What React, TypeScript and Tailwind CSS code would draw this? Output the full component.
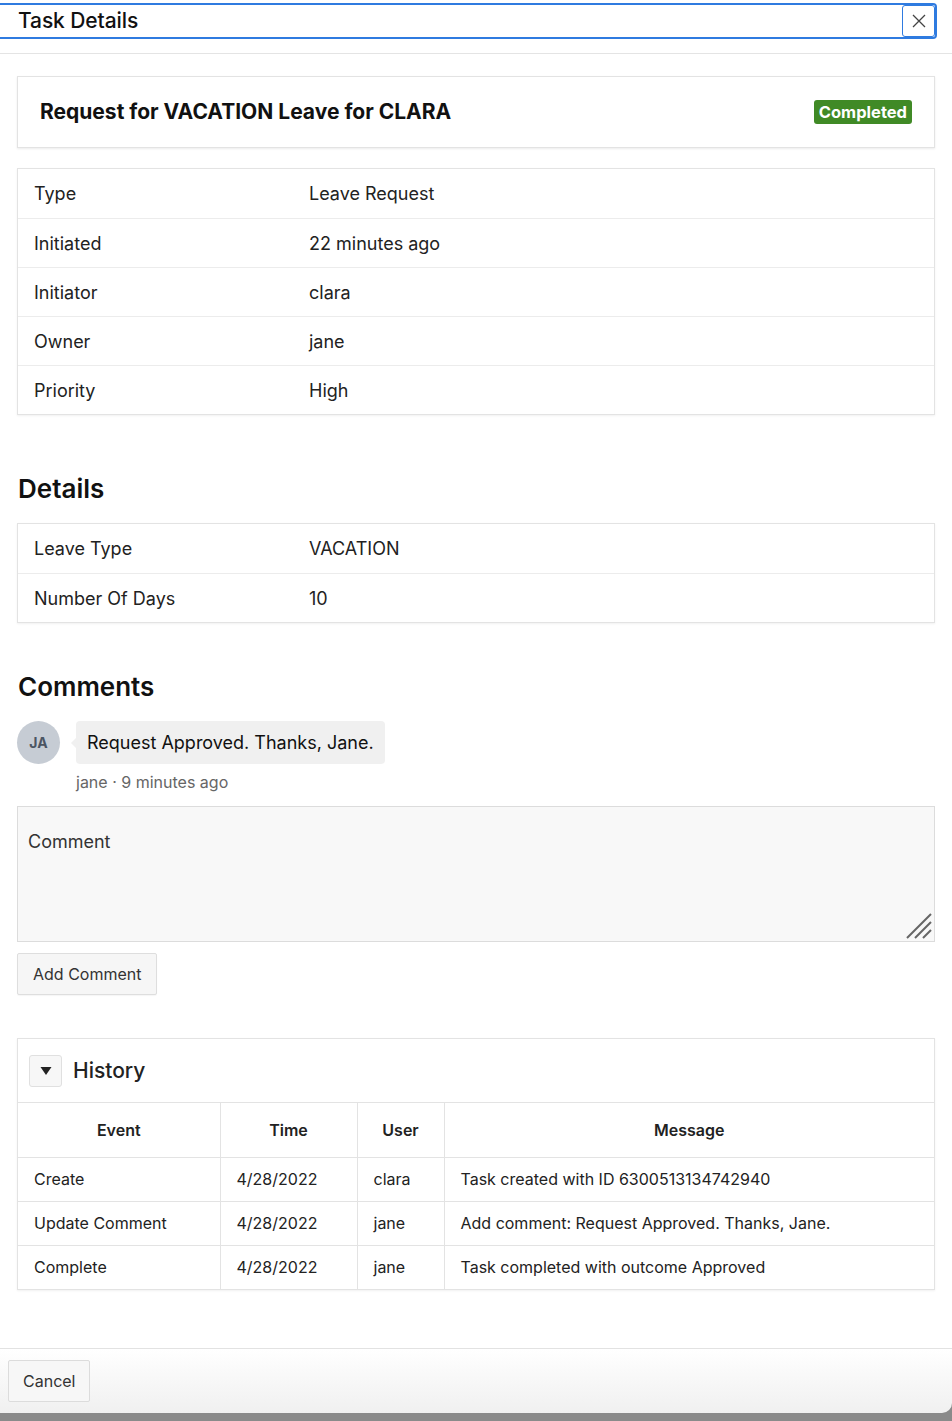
import React from "react";

const font = { fontFamily: "Inter, 'Noto Sans', sans-serif" };

function KV({ rows }: { rows: [string, string][] }) {
  return (
    <div className="mx-[17px] border border-[#e3e3e3] shadow-[0_1px_2px_rgba(0,0,0,0.06)] bg-white">
      {rows.map(([k, v], i) => (
        <div
          key={k}
          className={`flex h-[49px] items-center text-[18px] text-[#222] ${i > 0 ? "border-t border-[#ececec]" : ""}`}
        >
          <div className="w-[291px] pl-[16px]">{k}</div>
          <div>{v}</div>
        </div>
      ))}
    </div>
  );
}

export default function App() {
  const history = [
    ["Create", "4/28/2022", "clara", "Task created with ID 6300513134742940"],
    ["Update Comment", "4/28/2022", "jane", "Add comment: Request Approved. Thanks, Jane."],
    ["Complete", "4/28/2022", "jane", "Task completed with outcome Approved"],
  ];
  return (
    <div style={font} className="w-[952px] h-[1421px] bg-[#8a8a8a] flex flex-col overflow-hidden">
      <div className="bg-white flex-1 flex flex-col">
        {/* Header */}
        <div className="pt-[3px] h-[54px] border-b border-[#e4e4e4]">
          <div className="flex items-center h-[36px] w-[937px] border-2 border-[#2f7be0] rounded-r-[4px] border-l-0 bg-white">
            <div className="pl-[18px] text-[21px] font-medium text-[#111] flex-1 tracking-[-0.1px]">Task Details</div>
            <button className="mr-[0px] h-[32px] w-[33px] border border-[#2f7be0] rounded-[3px] flex items-center justify-center bg-white">
              <svg width="16" height="16" viewBox="0 0 16 16">
                <path d="M2 2 L14 14 M14 2 L2 14" stroke="#444" strokeWidth="1.3" />
              </svg>
            </button>
          </div>
        </div>

        {/* Title card */}
        <div className="mt-[22px] mx-[17px] h-[72px] border border-[#e3e3e3] shadow-[0_1px_2px_rgba(0,0,0,0.08)] flex items-center justify-between pl-[22px] pr-[22px]">
          <div className="text-[21px] font-bold text-[#111]">Request for VACATION Leave for CLARA</div>
          <span className="bg-[#408a26] text-white text-[16.5px] font-bold px-[5px] h-[24px] flex items-center rounded-[3px]">Completed</span>
        </div>

        <div className="mt-[20px]">
          <KV
            rows={[
              ["Type", "Leave Request"],
              ["Initiated", "22 minutes ago"],
              ["Initiator", "clara"],
              ["Owner", "jane"],
              ["Priority", "High"],
            ]}
          />
        </div>

        <h2 className="mt-[57px] mb-[17px] pl-[18px] text-[26px] font-semibold text-[#111] leading-[34px]">Details</h2>
        <KV
          rows={[
            ["Leave Type", "VACATION"],
            ["Number Of Days", "10"],
          ]}
        />

        <h2 className="mt-[47px] mb-[17px] pl-[18px] text-[26px] font-semibold text-[#111] leading-[34px]">Comments</h2>
        <div className="flex items-center pl-[17px]">
          <div className="w-[43px] h-[43px] rounded-full bg-[#c6ccd4] flex items-center justify-center text-[14px] font-bold text-[#4b5563]">JA</div>
          <div className="relative ml-[16px] bg-[#f0f0f0] rounded-[4px] h-[43px] flex items-center px-[11px] text-[18px] text-[#111]">
            <span className="absolute left-[-5px] top-[17px] w-0 h-0 border-y-[5px] border-y-transparent border-r-[5px] border-r-[#f0f0f0]" />
            Request Approved. Thanks, Jane.
          </div>
        </div>
        <div className="pl-[76px] mt-[7px] text-[16px] text-[#666] leading-[22px]">jane · 9 minutes ago</div>

        <div className="relative mx-[17px] mt-[13px] h-[136px] border border-[#dcdcdc] bg-[#f8f8f8] px-[10px] pt-[21px] text-[18px] text-[#333]">
          Comment
          <svg className="absolute right-[2px] bottom-[2px]" width="26" height="26" viewBox="0 0 26 26">
            <path d="M1 25 L25 1 M9 25 L25 9 M17 25 L25 17" stroke="#666" strokeWidth="2" />
          </svg>
        </div>
        <div className="pl-[17px] mt-[11px]">
          <button className="h-[42px] px-[15px] border border-[#dedede] bg-[#f6f6f6] rounded-[2px] text-[16px] text-[#333] shadow-[0_1px_1px_rgba(0,0,0,0.04)]">
            Add Comment
          </button>
        </div>

        {/* History */}
        <div className="mt-[43px] mx-[17px] border border-[#e3e3e3] shadow-[0_1px_2px_rgba(0,0,0,0.06)]">
          <div className="h-[64px] flex items-center pl-[11px] border-b border-[#e3e3e3]">
            <button className="w-[33px] h-[32px] border border-[#e0e0e0] bg-[#f7f7f7] rounded-[3px] flex items-center justify-center">
              <svg width="12" height="10" viewBox="0 0 12 10">
                <path d="M0.5 1 L11.5 1 L6 9 Z" fill="#222" />
              </svg>
            </button>
            <span className="ml-[11px] text-[21px] font-medium text-[#222]">History</span>
          </div>
          <table className="w-full border-collapse text-[16px] text-[#222]">
            <colgroup>
              <col className="w-[202px]" />
              <col className="w-[137px]" />
              <col className="w-[87px]" />
              <col />
            </colgroup>
            <thead>
              <tr className="h-[54px]">
                {["Event", "Time", "User", "Message"].map((h, i) => (
                  <th key={h} className={`font-semibold text-center ${i > 0 ? "border-l border-[#e3e3e3]" : ""}`}>{h}</th>
                ))}
              </tr>
            </thead>
            <tbody>
              {history.map((r) => (
                <tr key={r[0]} className="h-[44px] border-t border-[#e3e3e3]">
                  {r.map((c, i) => (
                    <td key={i} className={`pl-[16px] ${i > 0 ? "border-l border-[#e3e3e3]" : ""}`}>{c}</td>
                  ))}
                </tr>
              ))}
            </tbody>
          </table>
        </div>

        <div className="flex-1" />
      </div>
      {/* Footer */}
      <div className="h-[65px] border-t border-[#e2e2e2] bg-gradient-to-b from-white to-[#f0f0f0] rounded-br-[10px] flex items-center pl-[8px]">
        <button className="h-[42px] px-[14px] border border-[#dcdcdc] bg-[#f7f7f7] rounded-[2px] text-[16px] text-[#333]">Cancel</button>
      </div>
      <div className="h-[8px]" />
    </div>
  );
}
